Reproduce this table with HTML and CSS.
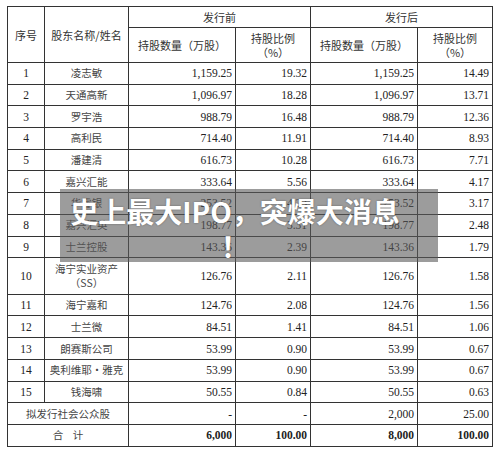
FILE: index.html
```html
<!DOCTYPE html>
<html lang="zh-CN">
<head>
    <meta charset="UTF-8">
    <meta name="viewport" content="width=device-width, initial-scale=1.0">
    <title>发行前后股本结构</title>
    <link rel="stylesheet" href="styles.css">
</head>
<body>
    <div class="page">
        <table class="share-table">
            <colgroup>
                <col class="c-no">
                <col class="c-name">
                <col class="c-num">
                <col class="c-pct">
                <col class="c-num">
                <col class="c-pct2">
            </colgroup>
            <thead>
                <tr class="head-top">
                    <th rowspan="2">序号</th>
                    <th rowspan="2">股东名称/姓名</th>
                    <th colspan="2">发行前</th>
                    <th colspan="2">发行后</th>
                </tr>
                <tr class="head-sub">
                    <th>持股数量（万股）</th>
                    <th>持股比例<br>（%）</th>
                    <th>持股数量（万股）</th>
                    <th>持股比例<br>（%）</th>
                </tr>
            </thead>
            <tbody>
                <tr><td class="no">1</td><td class="name">凌志敏</td><td>1,159.25</td><td>19.32</td><td>1,159.25</td><td>14.49</td></tr>
                <tr><td class="no">2</td><td class="name">天通高新</td><td>1,096.97</td><td>18.28</td><td>1,096.97</td><td>13.71</td></tr>
                <tr><td class="no">3</td><td class="name">罗宇浩</td><td>988.79</td><td>16.48</td><td>988.79</td><td>12.36</td></tr>
                <tr><td class="no">4</td><td class="name">高利民</td><td>714.40</td><td>11.91</td><td>714.40</td><td>8.93</td></tr>
                <tr><td class="no">5</td><td class="name">潘建清</td><td>616.73</td><td>10.28</td><td>616.73</td><td>7.71</td></tr>
                <tr><td class="no">6</td><td class="name">嘉兴汇能</td><td>333.64</td><td>5.56</td><td>333.64</td><td>4.17</td></tr>
                <tr><td class="no">7</td><td class="name">华睿银</td><td>253.52</td><td>4.23</td><td>253.52</td><td>3.17</td></tr>
                <tr><td class="no">8</td><td class="name">嘉兴汇英</td><td>198.77</td><td>3.31</td><td>198.77</td><td>2.48</td></tr>
                <tr><td class="no">9</td><td class="name">士兰控股</td><td>143.36</td><td>2.39</td><td>143.36</td><td>1.79</td></tr>
                <tr class="tall"><td class="no">10</td><td class="name">海宁实业资产<br>（SS）</td><td>126.76</td><td>2.11</td><td>126.76</td><td>1.58</td></tr>
                <tr><td class="no">11</td><td class="name">海宁嘉和</td><td>124.76</td><td>2.08</td><td>124.76</td><td>1.56</td></tr>
                <tr><td class="no">12</td><td class="name">士兰微</td><td>84.51</td><td>1.41</td><td>84.51</td><td>1.06</td></tr>
                <tr><td class="no">13</td><td class="name">朗赛斯公司</td><td>53.99</td><td>0.90</td><td>53.99</td><td>0.67</td></tr>
                <tr><td class="no">14</td><td class="name">奥利维耶·雅克</td><td>53.99</td><td>0.90</td><td>53.99</td><td>0.67</td></tr>
                <tr><td class="no">15</td><td class="name">钱海啸</td><td>50.55</td><td>0.84</td><td>50.55</td><td>0.63</td></tr>
                <tr><td class="name" colspan="2">拟发行社会公众股</td><td>-</td><td>-</td><td>2,000</td><td>25.00</td></tr>
                <tr class="total"><td class="name" colspan="2">合&nbsp;&nbsp;&nbsp;&nbsp;计</td><td>6,000</td><td>100.00</td><td>8,000</td><td>100.00</td></tr>
            </tbody>
        </table>

        <div class="headline">史上最大IPO，突爆大消息！</div>
    </div>
</body>
</html>
```

FILE: styles.css
```css
body {
    margin: 0;
    padding: 0;
    background-color: #fff;
}
.page {
    position: relative;
    width: 500px;
    height: 451px;
    padding: 6px 0 0 7px;
    box-sizing: border-box;
}
.share-table {
    width: 485px;
    border-collapse: collapse;
    table-layout: fixed;
    font-family: "Liberation Serif", "Noto Sans CJK SC", serif;
    font-size: 11.5px;
    color: #222;
}
.c-no { width: 37px; }
.c-name { width: 84px; }
.c-num { width: 107px; }
.c-pct { width: 75px; }
.c-pct2 { width: 75px; }
.share-table th,
.share-table td {
    border: 1px solid #333;
    padding: 0 3px;
    line-height: 14px;
}
.share-table th {
    font-family: "Noto Sans CJK SC", sans-serif;
    font-weight: normal;
    font-size: 11px;
    color: #333;
    text-align: center;
}
.head-top { height: 21px; }
.head-sub { height: 35px; }
.share-table tbody tr { height: 21.7px; }
.share-table tbody tr.tall { height: 36.6px; }
.share-table td { text-align: right; }
.share-table td.no {
    text-align: center;
}
.share-table td.name {
    padding: 0 1px;
    text-align: center;
    font-family: "Noto Sans CJK SC", sans-serif;
    font-size: 10.5px;
    color: #444;
    white-space: nowrap;
}
.total td { font-weight: bold; }
.total td.name { font-weight: normal; }

.headline {
    position: absolute;
    left: 60px;
    top: 189px;
    width: 378px;
    height: 73px;
    box-sizing: border-box;
    padding: 5px 34px 0 6px;
    background-color: rgba(90, 90, 90, 0.6);
    color: #fff;
    font-family: "Noto Sans CJK SC", sans-serif;
    font-weight: bold;
    font-size: 28px;
    line-height: 35px;
    text-align: center;
    line-break: anywhere;
    text-shadow: 0 0 2px rgba(0, 0, 0, 0.4);
}
```
